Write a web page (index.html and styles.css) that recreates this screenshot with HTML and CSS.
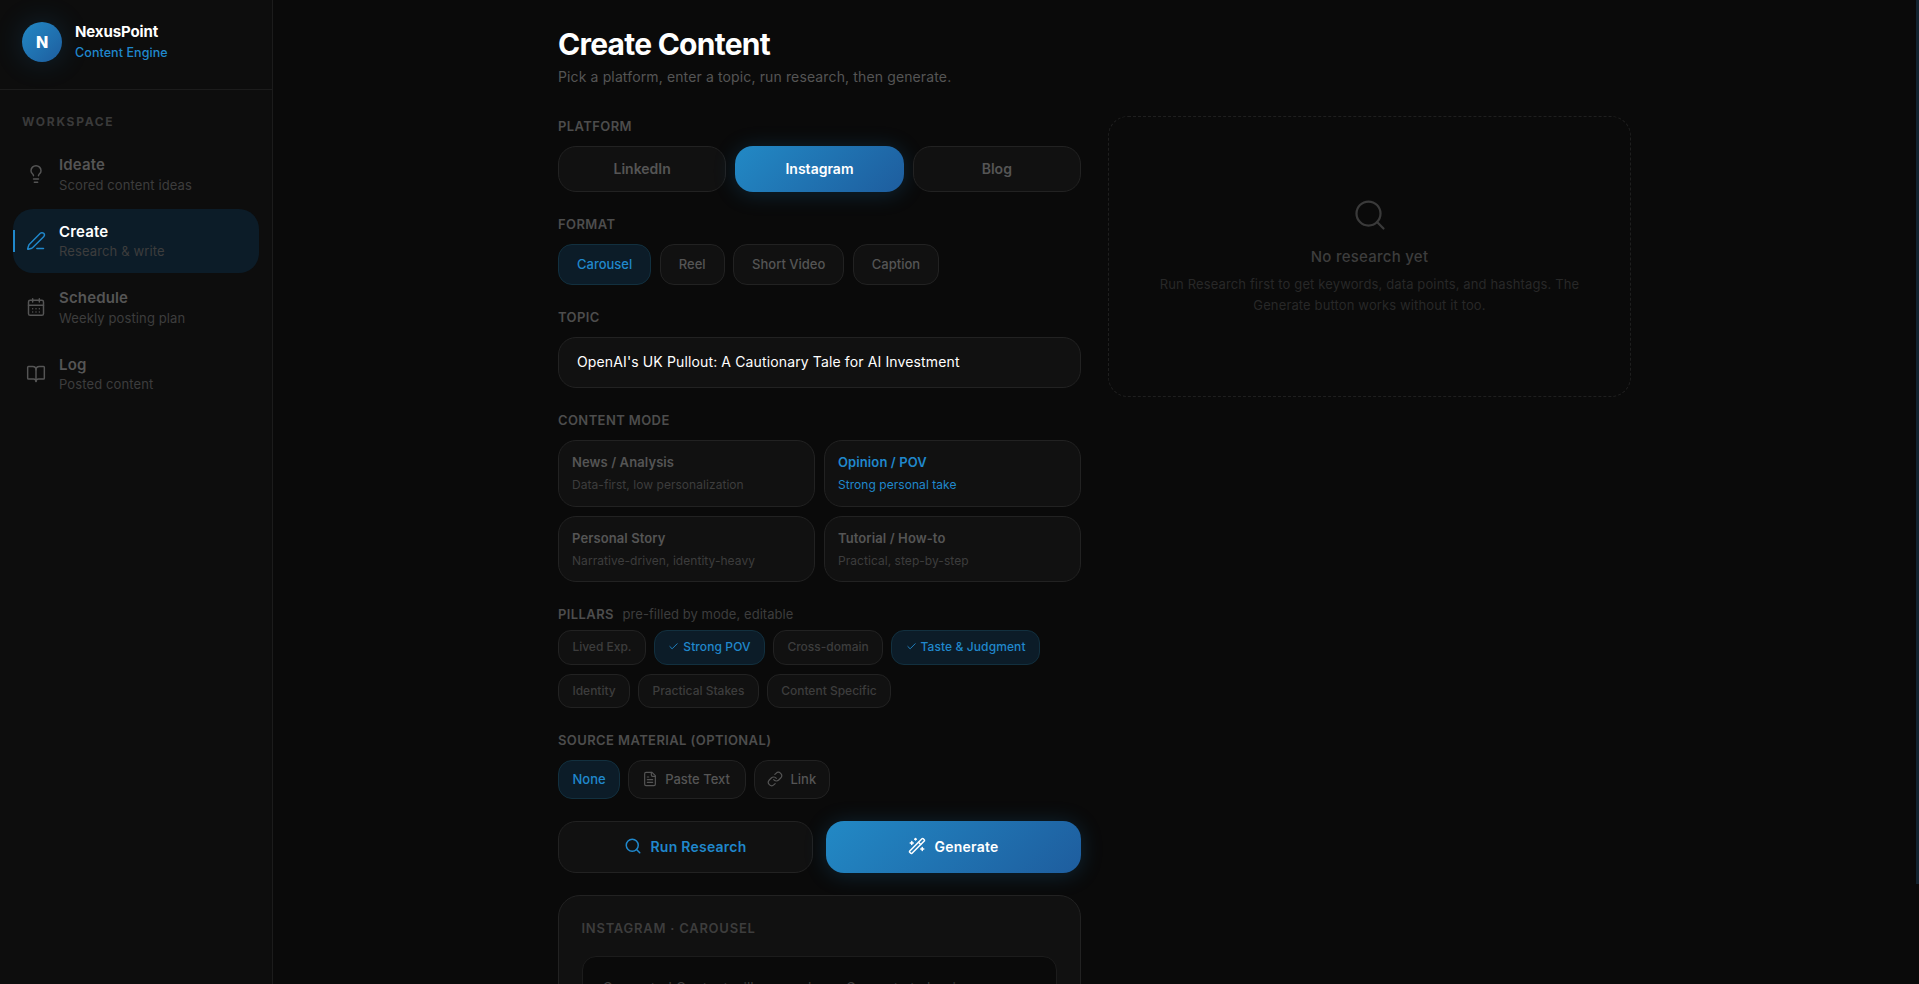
FILE: index.html
```html
<!doctype html>
<html lang="en">
<head>
    <meta charset="UTF-8">
    <title>NexusPoint - Create Content</title>
    <link rel="stylesheet" href="styles.css">
</head>
<body>
    <aside class="side">
        <div class="brand">
            <div class="logo">N</div>
            <div>
                <div class="brand-name">NexusPoint</div>
                <div class="brand-sub">Content Engine</div>
            </div>
        </div>
        <nav class="nav">
            <div class="nav-label">WORKSPACE</div>
            <a class="nav-item">
                <svg class="ico nav-ico" viewBox="0 0 24 24"><path d="M15 14c.2-1 .7-1.7 1.5-2.5 1-.9 1.5-2.2 1.5-3.5A6 6 0 0 0 6 8c0 1 .2 2.2 1.5 3.5.7.7 1.3 1.5 1.5 2.5"/><path d="M9 18h6"/><path d="M10 22h4"/></svg>
                <div><div class="nav-title">Ideate</div><div class="nav-sub">Scored content ideas</div></div>
            </a>
            <a class="nav-item on">
                <svg class="ico nav-ico" viewBox="0 0 24 24"><path d="M13 21h8"/><path d="M21.174 6.812a1 1 0 0 0-3.986-3.987L3.842 16.174a2 2 0 0 0-.5.83l-1.321 4.352a.5.5 0 0 0 .623.622l4.353-1.32a2 2 0 0 0 .83-.497z"/></svg>
                <div><div class="nav-title">Create</div><div class="nav-sub">Research &amp; write</div></div>
            </a>
            <a class="nav-item">
                <svg class="ico nav-ico" viewBox="0 0 24 24"><path d="M8 2v4"/><path d="M16 2v4"/><rect x="3" y="4" width="18" height="18" rx="2"/><path d="M3 10h18"/><path d="M8 14h.01"/><path d="M12 14h.01"/><path d="M16 14h.01"/><path d="M8 18h.01"/><path d="M12 18h.01"/><path d="M16 18h.01"/></svg>
                <div><div class="nav-title">Schedule</div><div class="nav-sub">Weekly posting plan</div></div>
            </a>
            <a class="nav-item">
                <svg class="ico nav-ico" viewBox="0 0 24 24"><path d="M12 7v14"/><path d="M3 18a1 1 0 0 1-1-1V4a1 1 0 0 1 1-1h5a4 4 0 0 1 4 4 4 4 0 0 1 4-4h5a1 1 0 0 1 1 1v13a1 1 0 0 1-1 1h-6a3 3 0 0 0-3 3 3 3 0 0 0-3-3z"/></svg>
                <div><div class="nav-title">Log</div><div class="nav-sub">Posted content</div></div>
            </a>
        </nav>
    </aside>

    <main class="main">
        <div class="wrap">
            <h1 class="title">Create Content</h1>
            <p class="lead">Pick a platform, enter a topic, run research, then generate.</p>

            <div class="cols">
                <div class="form">
                    <section>
                        <div class="label">PLATFORM</div>
                        <div class="platforms">
                            <button class="plat">LinkedIn</button>
                            <button class="plat primary">Instagram</button>
                            <button class="plat">Blog</button>
                        </div>
                    </section>

                    <section>
                        <div class="label">FORMAT</div>
                        <div class="row">
                            <button class="pill sel">Carousel</button>
                            <button class="pill">Reel</button>
                            <button class="pill">Short Video</button>
                            <button class="pill">Caption</button>
                        </div>
                    </section>

                    <section>
                        <div class="label">TOPIC</div>
                        <input class="topic" type="text" value="OpenAI's UK Pullout: A Cautionary Tale for AI Investment">
                    </section>

                    <section>
                        <div class="label">CONTENT MODE</div>
                        <div class="modes">
                            <div class="mode"><div class="mode-title">News / Analysis</div><div class="mode-sub">Data-first, low personalization</div></div>
                            <div class="mode sel"><div class="mode-title">Opinion / POV</div><div class="mode-sub">Strong personal take</div></div>
                            <div class="mode"><div class="mode-title">Personal Story</div><div class="mode-sub">Narrative-driven, identity-heavy</div></div>
                            <div class="mode"><div class="mode-title">Tutorial / How-to</div><div class="mode-sub">Practical, step-by-step</div></div>
                        </div>
                    </section>

                    <section>
                        <div class="label label-tight">PILLARS <span class="label-note">pre-filled by mode, editable</span></div>
                        <div class="chips">
                            <button class="chip">Lived Exp.</button>
                            <button class="chip sel"><svg class="ico chk" viewBox="0 0 24 24"><path d="M20 6 9 17l-5-5"/></svg>Strong POV</button>
                            <button class="chip">Cross-domain</button>
                            <button class="chip sel"><svg class="ico chk" viewBox="0 0 24 24"><path d="M20 6 9 17l-5-5"/></svg>Taste &amp; Judgment</button>
                            <button class="chip">Identity</button>
                            <button class="chip">Practical Stakes</button>
                            <button class="chip">Content Specific</button>
                        </div>
                    </section>

                    <section>
                        <div class="label">SOURCE MATERIAL (OPTIONAL)</div>
                        <div class="row row-src">
                            <button class="src sel">None</button>
                            <button class="src has-ico"><svg class="ico src-ico" viewBox="0 0 24 24"><path d="M15 2H6a2 2 0 0 0-2 2v16a2 2 0 0 0 2 2h12a2 2 0 0 0 2-2V7Z"/><path d="M14 2v4a2 2 0 0 0 2 2h4"/><path d="M10 9H8"/><path d="M16 13H8"/><path d="M16 17H8"/></svg>Paste Text</button>
                            <button class="src has-ico src-link"><svg class="ico src-ico" viewBox="0 0 24 24"><path d="M10 13a5 5 0 0 0 7.54.54l3-3a5 5 0 0 0-7.07-7.07l-1.72 1.71"/><path d="M14 11a5 5 0 0 0-7.54-.54l-3 3a5 5 0 0 0 7.07 7.07l1.71-1.71"/></svg>Link</button>
                        </div>
                    </section>

                    <div class="actions">
                        <button class="act research"><svg class="ico act-ico" viewBox="0 0 24 24"><circle cx="11" cy="11" r="8"/><path d="m21 21-4.3-4.3"/></svg>Run Research</button>
                        <button class="act primary"><svg class="ico act-ico" viewBox="0 0 24 24"><path d="m21.64 3.64-1.28-1.28a1.21 1.21 0 0 0-1.72 0L2.36 18.64a1.21 1.21 0 0 0 0 1.72l1.28 1.28a1.2 1.2 0 0 0 1.72 0L21.64 5.36a1.2 1.2 0 0 0 0-1.72"/><path d="m14 7 3 3"/><path d="M5 6v4"/><path d="M19 14v4"/><path d="M10 2v2"/><path d="M7 8H3"/><path d="M21 16h-4"/><path d="M11 3H9"/></svg>Generate</button>
                    </div>

                    <div class="card">
                        <div class="card-label">INSTAGRAM · CAROUSEL</div>
                        <div class="card-box">Generated Content will appear here. Generate to begin.</div>
                    </div>
                </div>

                <div class="empty">
                    <svg class="ico empty-ico" viewBox="0 0 24 24"><circle cx="11" cy="11" r="8"/><path d="m21 21-4.3-4.3"/></svg>
                    <div class="empty-title">No research yet</div>
                    <p class="empty-text">Run Research first to get keywords, data points, and hashtags. The Generate button works without it too.</p>
                </div>
            </div>
        </div>
        <div class="thumb"></div>
    </main>
</body>
</html>
```

FILE: styles.css
```css
*{
    margin: 0;
    padding: 0;
    box-sizing: border-box;
}
html,body{
    height: 100%;
    overflow: hidden;
}
body{
    display: flex;
    background: #0a0a0a;
    color: #666;
    font-family: Inter, "Noto Sans", sans-serif;
}
button,input{
    font-family: inherit;
}
.ico{
    fill: none;
    stroke: currentColor;
    stroke-width: 2;
    stroke-linecap: round;
    stroke-linejoin: round;
    flex: none;
}

/* sidebar */
.side{
    width: 273px;
    flex: none;
    background: #0d0d0d;
    border-right: 1px solid #1c1c1c;
}
.brand{
    height: 90px;
    padding: 22px 22px 0;
    display: flex;
    gap: 13px;
    border-bottom: 1px solid #1c1c1c;
}
.logo{
    width: 40px;
    height: 40px;
    border-radius: 50%;
    background: linear-gradient(135deg, #2289c5, #1e5d9e);
    box-shadow: 0 0 30px rgba(32,136,204,.2);
    color: #fff;
    font-size: 16px;
    font-weight: 800;
    display: flex;
    align-items: center;
    justify-content: center;
}
.brand-name{
    color: #fff;
    font-size: 15px;
    font-weight: 700;
    line-height: 20px;
    letter-spacing: -.1px;
}
.brand-sub{
    color: #2088cc;
    font-size: 12.5px;
    font-weight: 500;
    line-height: 20px;
    letter-spacing: .08px;
    margin-top: 1px;
}
.nav{
    padding: 24.75px 13px 0;
    display: flex;
    flex-direction: column;
    gap: 2.5px;
}
.nav-label{
    padding-left: 9px;
    margin-bottom: 11px;
    font-size: 12px;
    font-weight: 700;
    line-height: 14px;
    letter-spacing: 1.7px;
    color: #3a3a3a;
}
.nav-item{
    position: relative;
    height: 64px;
    padding: 13px 13px;
    display: flex;
    align-items: flex-start;
    gap: 13px;
    border-radius: 20px;
}
.nav-ico{
    width: 20px;
    height: 20px;
    margin-top: 9px;
    color: #555;
    stroke-width: 1.75;
}
.nav-title{
    color: #555;
    font-size: 15px;
    font-weight: 600;
    line-height: 20px;
    letter-spacing: .15px;
}
.nav-sub{
    padding-top: .5px;
    color: #3d3d3d;
    font-size: 13px;
    line-height: 18px;
    letter-spacing: .12px;
}
.nav-item.on{
    background: #0c1c28;
}
.nav-item.on:before{
    content: "";
    position: absolute;
    left: 0;
    top: 21px;
    width: 2px;
    height: 22px;
    background: #2088cc;
}
.nav-item.on .nav-ico{
    color: #2088cc;
}
.nav-item.on .nav-title{
    color: #fff;
}

/* main */
.main{
    position: relative;
    flex: 1;
    height: 100%;
    padding-right: 3px;
    overflow: hidden;
}
.thumb{
    position: absolute;
    top: 0;
    right: 0;
    width: 3px;
    height: 884px;
    background: #13232f;
}
.wrap{
    max-width: 1137px;
    margin: 0 auto;
    padding: 27px 32px 32px;
}
.title{
    color: #fff;
    font-size: 30px;
    font-weight: 700;
    line-height: 34px;
    letter-spacing: -.75px;
}
.lead{
    margin-top: 6px;
    color: #555;
    font-size: 14px;
    line-height: 20px;
    letter-spacing: .13px;
}
.cols{
    margin-top: 29px;
    display: grid;
    grid-template-columns: 1fr 1fr;
    gap: 27px;
    align-items: start;
}
.form{
    display: flex;
    flex-direction: column;
    gap: 22px;
}
.label{
    margin-bottom: 10px;
    color: #4d4d4d;
    font-size: 13px;
    font-weight: 600;
    line-height: 20px;
    letter-spacing: .4px;
}
.label-tight{
    margin-bottom: 6px;
}
.label-note{
    margin-left: 5px;
    color: #3d3d3d;
    font-weight: 400;
    letter-spacing: .05px;
}
.row{
    display: flex;
    gap: 8.5px;
}
.row-src{
    gap: 8px;
}

.platforms{
    display: grid;
    grid-template-columns: repeat(3, 1fr);
    gap: 9px;
}
.plat{
    height: 46px;
    padding-bottom: 2px;
    border: 1px solid #222;
    border-radius: 18px;
    background: #111;
    color: #555;
    font-size: 14px;
    font-weight: 600;
}
.primary{
    border: 0;
    background: linear-gradient(135deg, #2289c5, #1e5d9e);
    box-shadow: 0 2px 22px rgba(32,136,204,.22);
    color: #fff;
}
.pill{
    height: 41px;
    padding: 0 18px 1px;
    border: 1px solid #222;
    border-radius: 14px;
    background: #111;
    color: #555;
    font-size: 13px;
    font-weight: 500;
}
.sel{
    background: #0c1c28;
    border-color: #12303f;
    color: #2088cc;
}
.topic{
    display: block;
    width: 100%;
    height: 51px;
    padding: 0 18px 2px;
    border: 1px solid #222;
    border-radius: 18px;
    background: #111;
    color: #fff;
    font-size: 14px;
    font-weight: 400;
    letter-spacing: .13px;
    outline: none;
}
.modes{
    display: grid;
    grid-template-columns: 1fr 1fr;
    gap: 9px;
}
.mode{
    height: 66.5px;
    padding: 11px 13px;
    border: 1px solid #222;
    border-radius: 18px;
    background: #111;
}
.mode-title{
    color: #555;
    font-size: 13px;
    font-weight: 600;
    line-height: 20px;
    letter-spacing: .1px;
}
.mode-sub{
    margin-top: 4px;
    color: #3d3d3d;
    font-size: 12px;
    line-height: 18px;
    letter-spacing: .05px;
}
.mode.sel .mode-title,
.mode.sel .mode-sub{
    color: #2088cc;
}
.chips{
    display: flex;
    flex-wrap: wrap;
    gap: 9px 8px;
    margin-bottom: -.5px;
}
.chip{
    height: 34.5px;
    padding: 0 13.4px 1px;
    display: flex;
    align-items: center;
    border: 1px solid #222;
    border-radius: 13px;
    background: #111;
    color: #3d3d3d;
    font-size: 12px;
    font-weight: 500;
}
.chip.sel{
    background: #0c1c28;
    border-color: #12303f;
    color: #2088cc;
    letter-spacing: .1px;
}
.chk{
    width: 11px;
    height: 11px;
    margin-right: 4px;
}
.src{
    height: 39px;
    padding: 0 13.5px 1px;
    display: flex;
    align-items: center;
    border: 1px solid #222;
    border-radius: 14px;
    background: #111;
    color: #555;
    font-size: 13px;
    font-weight: 500;
}
.src.sel{
    background: #0c1c28;
    border-color: #12303f;
    color: #2088cc;
}
.has-ico{
    padding-left: 13px;
    padding-right: 15.5px;
    gap: 7px;
}
.src-link{
    padding-left: 12px;
    padding-right: 13px;
}
.src-ico{
    width: 16px;
    height: 16px;
    stroke-width: 1.75;
}
.actions{
    display: grid;
    grid-template-columns: 1fr 1fr;
    gap: 13px;
}
.act{
    height: 52px;
    padding-bottom: 1px;
    display: flex;
    align-items: center;
    justify-content: center;
    gap: 8px;
    border-radius: 18px;
    font-size: 14px;
    font-weight: 600;
    letter-spacing: .25px;
}
.research{
    border: 1px solid #222;
    background: #111;
    color: #2088cc;
}
.act-ico{
    width: 18px;
    height: 18px;
}
.card{
    padding: 22px 23px 23px 22.5px;
    border: 1px solid #222;
    border-radius: 22px;
    background: #111;
}
.card-label{
    color: #3d3d3d;
    font-size: 13px;
    font-weight: 600;
    line-height: 20px;
    letter-spacing: .75px;
}
.card-box{
    margin-top: 18px;
    height: 84px;
    padding: 21px 20px;
    border: 1px solid #1c1c1c;
    border-radius: 14px;
    background: #0a0a0a;
    color: #3d3d3d;
    font-size: 14px;
    line-height: 20px;
}

/* research placeholder */
.empty{
    height: 281px;
    display: flex;
    flex-direction: column;
    align-items: center;
    justify-content: center;
    padding: 0 32px;
    border: 1px dashed #1f1f1f;
    border-radius: 20px;
    text-align: center;
}
.empty-ico{
    width: 36px;
    height: 36px;
    color: #3a3a3a;
    stroke-width: 1.5;
}
.empty-title{
    margin-top: 14px;
    color: #3d3d3d;
    font-size: 15px;
    font-weight: 500;
    line-height: 20px;
    letter-spacing: .25px;
}
.empty-text{
    margin-top: 7px;
    color: #282828;
    font-size: 13px;
    line-height: 21px;
    letter-spacing: .13px;
}
```
